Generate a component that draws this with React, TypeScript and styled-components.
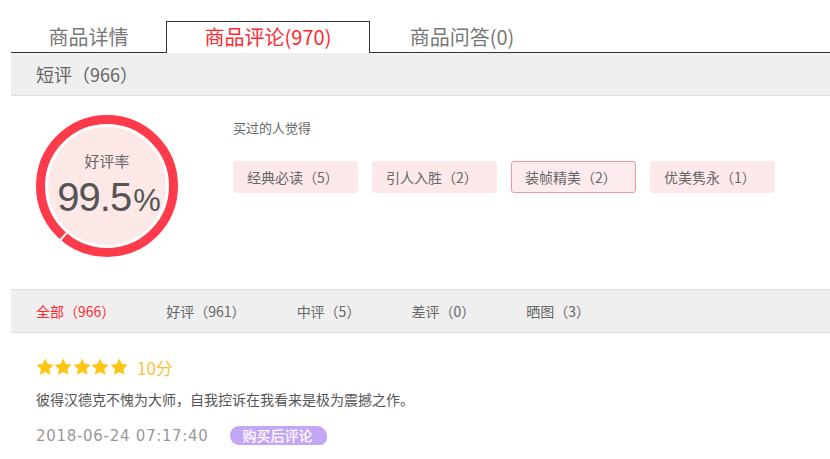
import styled, { createGlobalStyle } from 'styled-components'

const GlobalStyle = createGlobalStyle`
    body {
        margin: 0;
        background: #fff;
        font-family: 'Noto Sans CJK SC', 'Noto Sans', sans-serif;
        color: #666;
    }
`
const Page = styled.div`
    padding: 21px 0 0 11px;
    width: 840px;
`
const TabBar = styled.div`
    display: flex;
    align-items: flex-start;
    height: 31px;
    border-bottom: 1px solid #333;
`
const Tab = styled.div<{ active?: boolean; w: number }>`
    width: ${p => p.w}px;
    box-sizing: border-box;
    height: ${p => p.active ? 32 : 31}px;
    line-height: 30px;
    text-align: center;
    font-size: 20px;
    color: ${p => p.active ? '#ff2832' : '#777'};
    border: 1px solid ${p => p.active ? '#333' : 'transparent'};
    border-bottom: none;
    background: ${p => p.active ? '#fff' : 'transparent'};
    position: relative;
    z-index: 1;
`
const SectionBar = styled.div`
    height: 42px;
    background: #efefef;
    border-bottom: 1px solid #ddd;
    display: flex;
    align-items: center;
    padding-left: 25px;
    font-size: 18px;
    color: #666;
`
const Summary = styled.div`
    display: flex;
    height: 193px;
    padding: 19px 0 0 25px;
    box-sizing: border-box;
    gap: 55px;
`
const Ring = styled.div`
    width: 142px;
    height: 142px;
    box-sizing: border-box;
    border-radius: 50%;
    border: 9px solid #fe3b4a;
    padding: 3px;
    background: #fde8e8;
    background-clip: content-box;
    display: flex;
    flex-direction: column;
    align-items: center;
    justify-content: center;
    position: relative;
    flex-shrink: 0;

    &::after {
        content: '';
        position: absolute;
        left: 50%;
        top: 50%;
        width: 2px;
        height: 11px;
        margin: -5px 0 0 -1px;
        background: #fff;
        transform: rotate(41deg) translateY(66px);
    }
`
const RateLabel = styled.div`
    font-size: 15px;
    color: #666;
    line-height: 20px;
    margin-bottom: 6px;
`
const RateValue = styled.div`
    font-family: 'Liberation Sans', Arial, sans-serif;
    font-size: 40px;
    line-height: 40px;
    color: #555;
    letter-spacing: -1px;
    margin-left: 3px;

    span {
        font-size: 31px;
        margin-left: 2px;
    }
`
const Impressions = styled.div`
    padding-top: 4px;
`
const ImpTitle = styled.div`
    font-size: 13px;
    color: #666;
    line-height: 18px;
`
const TagList = styled.div`
    display: flex;
    gap: 14px;
    margin-top: 24px;
`
const Tag = styled.div<{ active?: boolean }>`
    width: 125px;
    height: 32px;
    box-sizing: border-box;
    padding-left: 13px;
    display: flex;
    align-items: center;
    font-size: 14px;
    color: #666;
    background: ${p => p.active ? '#fdecee' : '#fde9ea'};
    border: 1px solid ${p => p.active ? '#f4959f' : '#fde9ea'};
    border-radius: 3px;
`
const FilterBar = styled.div`
    height: 42px;
    background: #efefef;
    border-top: 1px solid #ddd;
    border-bottom: 1px solid #ddd;
    display: flex;
    align-items: center;
    padding-left: 25px;
    gap: 51px;
`
const Filter = styled.div<{ active?: boolean }>`
    font-size: 14px;
    color: ${p => p.active ? '#ff2832' : '#666'};
`
const Review = styled.div`
    padding: 22px 0 0 25px;
`
const ScoreRow = styled.div`
    display: flex;
    align-items: center;
    gap: 9px;
    height: 24px;
`
const Stars = styled.div`
    display: flex;
`
const Score = styled.span`
    font-size: 17px;
    color: #fbc03e;
`
const Content = styled.div`
    font-size: 14px;
    color: #555;
    margin-top: 9px;
    line-height: 22px;
`
const Meta = styled.div`
    display: flex;
    align-items: center;
    gap: 21px;
    margin-top: 16px;
`
const Time = styled.span`
    font-family: 'DejaVu Sans', sans-serif;
    font-size: 15px;
    letter-spacing: 0.7px;
    color: #999;
`
const Badge = styled.span`
    background: #c3a7f6;
    color: #fff;
    font-size: 14px;
    line-height: 19px;
    padding: 0 14px 0 13px;
    border-radius: 9px 10px 7px 9px;
    font-weight: 500;
`

const Star = () => (
    <svg width='18.4' height='18' viewBox='1 1.5 22 20.5'>
        <path
            d='M12 1.5l3.1 6.6 7.2.9-5.3 5 1.4 7.1L12 17.6l-6.4 3.5 1.4-7.1-5.3-5 7.2-.9z'
            fill='#ffc515'
        />
    </svg>
)

const tabs = [
    { label: '商品详情', w: 155 },
    { label: '商品评论(970)', w: 204, active: true },
    { label: '商品问答(0)', w: 184 },
]
const tags = ['经典必读（5）', '引人入胜（2）', '装帧精美（2）', '优美隽永（1）']
const filters = ['全部（966）', '好评（961）', '中评（5）', '差评（0）', '晒图（3）']

export default function App() {
    return (
        <Page>
            <GlobalStyle />
            <TabBar>
                {tabs.map(t => (
                    <Tab key={t.label} w={t.w} active={t.active}>{t.label}</Tab>
                ))}
            </TabBar>
            <SectionBar>短评（966）</SectionBar>
            <Summary>
                <Ring>
                    <RateLabel>好评率</RateLabel>
                    <RateValue>99.5<span>%</span></RateValue>
                </Ring>
                <Impressions>
                    <ImpTitle>买过的人觉得</ImpTitle>
                    <TagList>
                        {tags.map((t, i) => <Tag key={t} active={i === 2}>{t}</Tag>)}
                    </TagList>
                </Impressions>
            </Summary>
            <FilterBar>
                {filters.map((f, i) => <Filter key={f} active={i === 0}>{f}</Filter>)}
            </FilterBar>
            <Review>
                <ScoreRow>
                    <Stars>
                        {[0, 1, 2, 3, 4].map(i => <Star key={i} />)}
                    </Stars>
                    <Score>10分</Score>
                </ScoreRow>
                <Content>彼得汉德克不愧为大师，自我控诉在我看来是极为震撼之作。</Content>
                <Meta>
                    <Time>2018-06-24 07:17:40</Time>
                    <Badge>购买后评论</Badge>
                </Meta>
            </Review>
        </Page>
    )
}
